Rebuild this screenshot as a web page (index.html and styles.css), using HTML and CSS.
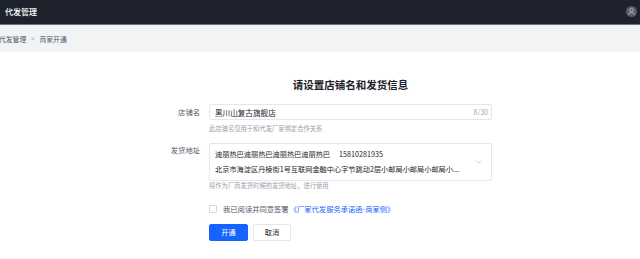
FILE: index.html
```html
<!DOCTYPE html>
<html lang="zh-CN">
<head>
<meta charset="utf-8">
<title>商家开通</title>
<link rel="stylesheet" href="styles.css">
</head>
<body>
<header class="topbar">
  <span class="brand">代发管理</span>
  <span class="avatar">
    <svg viewBox="0 0 12 12" width="11" height="11">
      <circle cx="6" cy="6" r="6" fill="#585d67"/>
      <circle cx="6" cy="4.6" r="1.9" fill="none" stroke="#c9ccd2" stroke-width="0.8"/>
      <path d="M2.9 9.6c0.4-1.6 1.6-2.5 3.1-2.5s2.7 0.9 3.1 2.5" fill="none" stroke="#c9ccd2" stroke-width="0.8"/>
    </svg>
  </span>
</header>
<nav class="crumbs">
  <span class="crumb">代发管理</span>
  <span class="sep">&gt;</span>
  <span class="crumb current">商家开通</span>
</nav>
<main class="main">
  <div class="form">
    <div></div>
    <h1 class="title">请设置店铺名和发货信息</h1>

    <div class="label label-name">店铺名</div>
    <div class="field">
      <div class="input">
        <span class="value">黑川山复古旗舰店</span>
        <span class="count">8/30</span>
      </div>
      <div class="help help-name">此店铺名仅用于和代发厂家绑定合作关系</div>
    </div>

    <div class="label label-addr">发货地址</div>
    <div class="field">
      <div class="select">
        <div class="lines">
          <div class="line">迪丽热巴迪丽热巴迪丽热巴迪丽热巴<span class="phone">15810281935</span></div>
          <div class="line">北京市海淀区丹棱街1号互联网金融中心字节跳动2层小邮局小邮局小邮局小...</div>
        </div>
        <svg class="chev" viewBox="0 0 8 5" width="6" height="4">
          <path d="M0.5 0.8L4 4.2L7.5 0.8" fill="none" stroke="#a9aeb8" stroke-width="0.8"/>
        </svg>
      </div>
      <div class="help help-addr">将作为厂商发货时候的发货地址，进行使用</div>
    </div>

    <div></div>
    <div class="agree">
      <span class="checkbox"></span>
      <span class="agree-text">我已阅读并同意签署</span><a class="link">《厂家代发服务承诺函-商家侧》</a>
    </div>

    <div></div>
    <div class="actions">
      <button class="btn btn-primary">开通</button>
      <button class="btn btn-default">取消</button>
    </div>
  </div>
</main>
</body>
</html>
```

FILE: styles.css
```css
* { box-sizing: border-box; }
html, body { margin: 0; padding: 0; background: #fff; }
body {
  font-family: "Noto Sans CJK SC", "Noto Sans", sans-serif;
  color: #1d2129;
  width: 640px;
  height: 259px;
  overflow: hidden;
}
.topbar {
  height: 25px;
  background: #1e222d;
  border-bottom: 1px solid #6c7079;
  display: flex;
  align-items: center;
  justify-content: space-between;
  padding: 0 3px 1px 5px;
}
.brand {
  color: #fff;
  font-size: 8px;
  font-weight: 500;
  line-height: 10px;
}
.avatar { display: flex; width: 11px; height: 11px; }
.crumbs {
  height: 27px;
  background: #f2f3f5;
  display: flex;
  align-items: center;
  font-size: 6.8px;
  color: #4e5969;
  margin-left: -1px;
}
.sep { margin: 0 5px 0 5px; color: #86909c; font-size: 6px; }
.main { padding-top: 26px; }
.form {
  display: grid;
  grid-template-columns: 50px 283px;
  column-gap: 9px;
  margin-left: 150px;
  align-items: start;
}
.title {
  margin: 0 0 12px;
  font-size: 10.5px;
  line-height: 14px;
  font-weight: 700;
  text-align: center;
  color: #1d2129;
}
.label {
  text-align: right;
  font-size: 7.3px;
  color: #4e5969;
}
.label-name { line-height: 16px; }
.label-addr { line-height: 12px; margin-top: 11px; }
.input {
  height: 16px;
  border: 1px solid #e5e6eb;
  border-radius: 2px;
  display: flex;
  align-items: center;
  justify-content: space-between;
  padding: 0 3px 0 5px;
}
.value { font-size: 7.6px; color: #1d2129; }
.count { font-size: 7px; color: #a2a8b2; }
.help {
  font-size: 6.3px;
  line-height: 8px;
  color: #9aa0aa;
}
.help-name { margin-top: 4.5px; }
.help-addr { margin-top: 1.5px; }
.select {
  margin-top: 10px;
  height: 38px;
  border: 1px solid #e5e6eb;
  border-radius: 2px;
  padding: 3px 9px 3px 5px;
  display: flex;
  align-items: center;
  justify-content: space-between;
}
.line {
  font-size: 7.2px;
  line-height: 15px;
  color: #1d2129;
  white-space: nowrap;
}
.phone { margin-left: 9px; }
.chev { display: block; }
.agree {
  margin-top: 14px;
  height: 10px;
  display: flex;
  align-items: center;
  font-size: 7.3px;
}
.checkbox {
  width: 8px;
  height: 8px;
  border: 1px solid #d4d7dd;
  border-radius: 1px;
  background: #fff;
  margin-right: 6px;
}
.agree-text { color: #4e5969; }
.link { color: #1664ff; margin-left: 1px; }
.actions {
  margin-top: 10px;
  display: flex;
  gap: 5px;
}
.btn {
  height: 17px;
  width: 39px;
  border-radius: 2px;
  font-family: inherit;
  font-size: 7.2px;
  padding: 0;
  line-height: 15px;
}
.btn-primary {
  background: #1664ff;
  border: 1px solid #1664ff;
  color: #fff;
}
.btn-default {
  width: 38px;
  background: #fff;
  border: 1px solid #e5e6eb;
  color: #1d2129;
}
```
